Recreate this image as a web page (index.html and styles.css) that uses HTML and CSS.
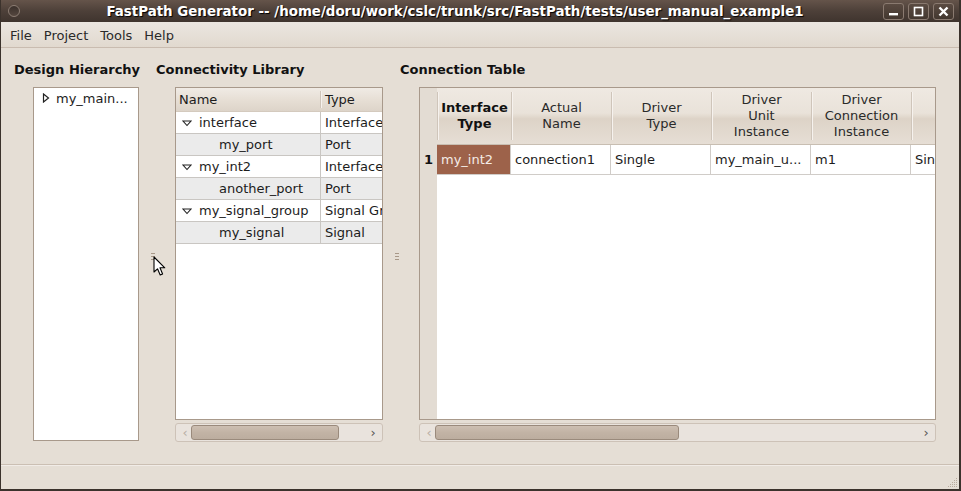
FILE: index.html
```html
<!DOCTYPE html>
<html>
<head>
<meta charset="utf-8">
<link rel="stylesheet" href="styles.css">
</head>
<body>
<div class="win">
  <div class="titlebar">
    <div class="tb-left"><span class="dot"></span></div>
    <div class="tb-title">FastPath Generator -- /home/doru/work/cslc/trunk/src/FastPath/tests/user_manual_example1</div>
    <div class="tb-btns">
      <span class="wbtn"><svg width="11" height="11" viewBox="0 0 11 11"><rect x="1" y="7" width="9" height="2.4" fill="#fff"/></svg></span>
      <span class="wbtn"><svg width="11" height="11" viewBox="0 0 11 11"><rect x="1.5" y="1.5" width="8" height="8" fill="none" stroke="#fff" stroke-width="1.6"/></svg></span>
      <span class="wbtn"><svg width="11" height="11" viewBox="0 0 11 11"><path d="M1.5 1.5 L9.5 9.5 M9.5 1.5 L1.5 9.5" stroke="#fff" stroke-width="2.4"/></svg></span>
    </div>
  </div>
  <div class="menubar">
    <span class="mi">File</span>
    <span class="mi">Project</span>
    <span class="mi">Tools</span>
    <span class="mi">Help</span>
  </div>
  <div class="main">
    <div class="pane p1">
      <div class="plabel">Design Hierarchy</div>
      <div class="frame hier">
        <div class="hrow">
          <svg class="exp" width="8" height="10" viewBox="0 0 8 10"><polygon points="1.5,1 6.5,5 1.5,9" fill="#fff" stroke="#222" stroke-width="1.2"/></svg>
          <span>my_main...</span>
        </div>
      </div>
    </div>
    <div class="split"><div class="grip"><i></i><i></i><i></i></div></div>
    <div class="pane p2">
      <div class="plabel">Connectivity Library</div>
      <div class="frame lib">
        <div class="lhead">
          <div class="lh c1">Name</div>
          <div class="lh c2">Type</div>
        </div>
        <div class="lrow"><div class="lc c1"><svg class="down" width="10" height="7" viewBox="0 0 10 7"><polygon points="1,1 9,1 5,5.5" fill="#fff" stroke="#222" stroke-width="1.1"/></svg>interface</div><div class="lc c2">Interface</div></div>
        <div class="lrow alt"><div class="lc c1 child">my_port</div><div class="lc c2">Port</div></div>
        <div class="lrow"><div class="lc c1"><svg class="down" width="10" height="7" viewBox="0 0 10 7"><polygon points="1,1 9,1 5,5.5" fill="#fff" stroke="#222" stroke-width="1.1"/></svg>my_int2</div><div class="lc c2">Interface</div></div>
        <div class="lrow alt"><div class="lc c1 child">another_port</div><div class="lc c2">Port</div></div>
        <div class="lrow"><div class="lc c1"><svg class="down" width="10" height="7" viewBox="0 0 10 7"><polygon points="1,1 9,1 5,5.5" fill="#fff" stroke="#222" stroke-width="1.1"/></svg>my_signal_group</div><div class="lc c2">Signal Group</div></div>
        <div class="lrow alt"><div class="lc c1 child">my_signal</div><div class="lc c2">Signal</div></div>
      </div>
      <div class="hscroll">
        <span class="arr dis">&#8249;</span>
        <div class="track"><div class="thumb s2"></div></div>
        <span class="arr">&#8250;</span>
      </div>
    </div>
    <div class="split"><div class="grip"><i></i><i></i><i></i></div></div>
    <div class="pane p3">
      <div class="plabel">Connection Table</div>
      <div class="frame ctab">
        <div class="rowhdrcol"></div>
        <div class="cbody">
          <div class="chead">
            <div class="ch w1 bold"><span>Interface<br>Type</span></div>
            <div class="ch w2"><span>Actual<br>Name</span></div>
            <div class="ch w2"><span>Driver<br>Type</span></div>
            <div class="ch w2"><span>Driver<br>Unit<br>Instance</span></div>
            <div class="ch w2"><span>Driver<br>Connection<br>Instance</span></div>
            <div class="ch w3"></div>
          </div>
          <div class="crow">
            <div class="cc w1 sel">my_int2</div>
            <div class="cc w2">connection1</div>
            <div class="cc w2">Single</div>
            <div class="cc w2">my_main_u...</div>
            <div class="cc w2">m1</div>
            <div class="cc w3">Single</div>
          </div>
        </div>
        <div class="rnum">1</div>
      </div>
      <div class="hscroll">
        <span class="arr dis">&#8249;</span>
        <div class="track"><div class="thumb s3"></div></div>
        <span class="arr">&#8250;</span>
      </div>
    </div>
  </div>
  <div class="status">
    <svg class="rgrip" width="12" height="12" viewBox="0 0 12 12" fill="#b8ab9e">
      <rect x="10" y="2" width="1" height="1"/><rect x="8" y="4" width="1" height="1"/><rect x="10" y="4" width="1" height="1"/>
      <rect x="6" y="6" width="1" height="1"/><rect x="8" y="6" width="1" height="1"/><rect x="10" y="6" width="1" height="1"/>
      <rect x="4" y="8" width="1" height="1"/><rect x="6" y="8" width="1" height="1"/><rect x="8" y="8" width="1" height="1"/><rect x="10" y="8" width="1" height="1"/>
      <rect x="2" y="10" width="1" height="1"/><rect x="4" y="10" width="1" height="1"/><rect x="6" y="10" width="1" height="1"/><rect x="8" y="10" width="1" height="1"/><rect x="10" y="10" width="1" height="1"/>
    </svg>
  </div>
  <svg class="cursor" width="14" height="22" viewBox="0 0 14 22"><path d="M1 1 L1 16 L4.5 12.8 L7.2 19 L9.6 18 L7 11.8 L11.8 11.8 Z" fill="#fff" stroke="#000" stroke-width="1.1" stroke-linejoin="round"/></svg>
</div>
</body>
</html>
```
FILE: styles.css
```css
* { box-sizing: border-box; }
body {
  margin: 0;
  font-family: "DejaVu Sans", "Liberation Sans", sans-serif;
  font-size: 13px;
  color: #1c1c1c;
  background: #2e2824;
}
.win {
  position: relative;
  width: 961px;
  height: 491px;
  display: flex;
  flex-direction: column;
  background: #e5ded5;
  border-left: 1px solid #3b322c;
  border-right: 2px solid #3b322c;
  border-bottom: 2px solid #3b322c;
  overflow: hidden;
}
.titlebar {
  height: 22px;
  flex: none;
  display: flex;
  align-items: center;
  background: linear-gradient(#65544a, #4d4039 50%, #3f342e);
  color: #fff;
}
.tb-left { width: 24px; display: flex; justify-content: center; padding-left: 2px; }
.dot {
  width: 12px; height: 12px; border-radius: 50%;
  background: linear-gradient(#3a302b, #55473f);
  border: 1px solid #8c7d73;
}
.tb-title {
  flex: 1;
  text-align: center;
  font-weight: bold;
  font-size: 13.4px;
  text-shadow: 1px 1px 1px #000;
  white-space: nowrap;
  padding-left: 2px;
}
.tb-btns { display: flex; gap: 4px; padding-right: 5px; }
.wbtn {
  width: 21px; height: 17px;
  border: 1px solid #8a7a70;
  border-radius: 3px;
  background: linear-gradient(#5a4b42, #43372f);
  display: flex; align-items: center; justify-content: center;
}
.menubar {
  height: 26px;
  flex: none;
  display: flex;
  align-items: center;
  gap: 12px;
  padding-left: 9px;
  padding-top: 2px;
  background: linear-gradient(#ebe6e0, #e1d9cf);
  border-bottom: 1px solid #c9bcb0;
}
.mi { color: #2a2a2a; }
.main {
  flex: 1;
  display: flex;
  padding-left: 13px;
}
.pane { display: flex; flex-direction: column; }
.p1 { width: 124px; }
.p2 { width: 226px; }
.p3 { width: 535px; }
.plabel {
  margin-top: 14px;
  height: 16px;
  line-height: 16px;
  font-weight: bold;
  white-space: nowrap;
  color: #111;
}
.split {
  width: 18px;
  display: flex;
  align-items: center;
  justify-content: center;
}
.grip { display: flex; flex-direction: column; gap: 2px; margin-left: 11px; margin-top: 0; }
.grip i { display: block; width: 4px; height: 1px; background: #a89888; }
.frame {
  margin-left: 19px;
  margin-top: 9px;
  background: #fff;
  border: 1px solid #a8998b;
}
.hier { width: 106px; height: 354px; }
.hrow { display: flex; align-items: center; height: 18px; padding-left: 8px; margin-top: 1px; gap: 6px; }
.lib { width: 208px; height: 333px; overflow: hidden; }
.lhead {
  display: flex;
  height: 24px;
  background: linear-gradient(#f0ebe5, #e6ded4 55%, #ddd4c9);
  border-bottom: 1px solid #d4cabe;
}
.lh { display: flex; align-items: center; padding-left: 4px; white-space: nowrap; }
.lhead .c1 { width: 145px; border-right: 1px solid #cfc5ba; margin: 3px 0; padding-left: 3px; box-shadow: 1px 0 0 #f6f2ee; }
.c1 { width: 145px; flex: none; }
.c2 { flex: 1; white-space: nowrap; overflow: hidden; }
.lrow { display: flex; height: 22px; border-bottom: 1px solid #c9c6c2; background: #fff; }
.lrow.alt { background: #ebebeb; }
.lc { display: flex; align-items: center; padding-left: 4px; white-space: nowrap; }
.lrow .c1 { border-right: 1px solid #c9c6c2; padding-left: 6px; }
.lrow .c1.child { padding-left: 43px; }
.down { margin-right: 7px; margin-top: 1px; }
.hscroll {
  margin-left: 19px;
  margin-top: 3px;
  height: 19px;
  display: flex;
  align-items: center;
  border: 1px solid #cdc2b7;
  border-radius: 3px;
  background: #e9e3dd;
  padding: 0 3px;
}
.p2 .hscroll { width: 208px; }
.p3 .hscroll { width: 517px; }
.arr { width: 12px; text-align: center; font-size: 13px; color: #555; line-height: 15px; }
.arr.dis { color: #b8aea4; }
.track { flex: 1; height: 15px; display: flex; }
.thumb {
  height: 15px;
  border: 1px solid #9a8a7c;
  border-radius: 3px;
  background: linear-gradient(#cdbfb2, #c2b3a5 50%, #bcad9f);
}
.s2 { width: 148px; margin-left: 0; }
.s3 { width: 244px; }
.ctab { width: 517px; height: 333px; display: flex; position: relative; overflow: hidden; }
.rowhdrcol { width: 17px; flex: none; background: #e3dcd3; }
.cbody { flex: 1; overflow: hidden; }
.chead {
  display: flex;
  height: 57px;
  background: linear-gradient(#efe9e2, #e9e2d9 45%, #ddd3c7 55%, #e6ded5);
  border-bottom: 1px solid #c8beb2;
}
.ch {
  display: flex; align-items: center; justify-content: center;
  text-align: center; line-height: 16px; color: #2a2a2a;
  margin: 4px 0;
  border-left: 1px solid #cfc5ba;
  box-shadow: inset 1px 0 0 #f6f2ee;
  flex: none;
}
.ch.bold { font-weight: bold; color: #111; }
.w1 { width: 74px; }
.w2 { width: 100px; }
.w3 { width: 40px; }
.crow { display: flex; height: 30px; border-bottom: 1px solid #d0ccc8; }
.cc {
  flex: none;
  display: flex; align-items: center;
  padding-left: 4px;
  white-space: nowrap; overflow: hidden;
  border-right: 1px solid #d0ccc8;
}
.cc.sel { background: #9d624a; color: #f4ece6; }
.rnum {
  position: absolute; left: 0; top: 57px; width: 17px; height: 29px;
  display: flex; align-items: center; justify-content: center;
  font-weight: bold; color: #111;
  background: #e3dcd3;
}
.status {
  height: 25px;
  flex: none;
  border-top: 1px solid #cbbfb3;
  box-shadow: inset 0 1px 0 #f1ece7;
  position: relative;
}
.rgrip { position: absolute; right: 1px; bottom: 1px; }
.cursor { position: absolute; left: 152px; top: 256px; }
```
